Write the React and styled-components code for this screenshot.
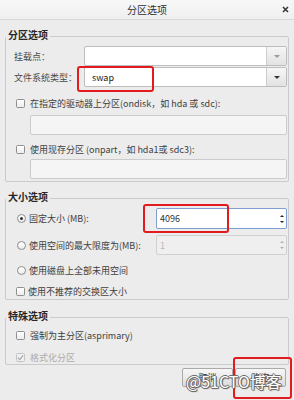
import React from 'react'
import styled, { createGlobalStyle } from 'styled-components'

const GlobalStyle = createGlobalStyle`
  html, body {
    margin: 0;
    padding: 0;
    background: #ececec;
  }
  body {
    font-family: "Noto Sans CJK SC", "Noto Sans", sans-serif;
    color: #404040;
  }
`

const Window = styled.div`
  position: relative;
  width: 294px;
  height: 400px;
  background: #ececec;
  overflow: hidden;
`

const TitleBar = styled.div`
  height: 20px;
  box-sizing: border-box;
  display: grid;
  grid-template-columns: 1fr auto 1fr;
  align-items: center;
  background: linear-gradient(#f8f8f8, #efefef);
  border-bottom: 1px solid #d8d8d8;
`

const Title = styled.div`
  grid-column: 2;
  font-size: 10px;
  color: #2f2f2f;
`

const Close = styled.div`
  justify-self: end;
  display: flex;
  padding-right: 5px;
`

const Content = styled.div`
  padding: 10px 5px 0;
`

const Frame = styled.fieldset`
  margin: ${p => p.$mt || 0}px 0 0;
  padding: ${p => p.$pt}px 1px ${p => p.$pb}px 8px;
  border: 1px solid #cacaca;
  border-radius: 2px;
  min-width: 0;
  display: flex;
  flex-direction: column;
`

const Legend = styled.legend`
  padding: 0 2px 3px;
  margin-left: -8px;
  font-size: 10px;
  line-height: 10px;
  font-weight: bold;
  color: #262626;
`

const FormRow = styled.div`
  display: flex;
  align-items: center;
  height: 20px;
  margin-top: ${p => p.$mt || 0}px;
`

const FieldLabel = styled.div`
  width: 70px;
  font-size: 9px;
  color: #4a4a4a;
`

const Combo = styled.div`
  flex: 1;
  display: flex;
  height: 100%;
  box-sizing: border-box;
  border: 1px solid #bdbdbd;
  border-radius: 2px;
  background: #fff;
  overflow: hidden;
`

const ComboText = styled.div`
  flex: 1;
  display: flex;
  align-items: center;
  padding-left: 7px;
  font-size: 9px;
  color: #222;
`

const ComboButton = styled.div`
  width: 19px;
  display: flex;
  align-items: center;
  justify-content: center;
  border-left: 1px solid #cdcdcd;
  background: linear-gradient(#f6f6f6, #e2e2e2);
`

const Arrow = styled.span`
  width: 0;
  height: 0;
  border-left: ${p => p.$s || 3}px solid transparent;
  border-right: ${p => p.$s || 3}px solid transparent;
  border-top: ${p => (p.$up ? 0 : `${p.$s || 3}px solid ${p.$c}`)};
  border-bottom: ${p => (p.$up ? `${p.$s || 3}px solid ${p.$c}` : 0)};
`

const CheckRow = styled.div`
  display: flex;
  align-items: center;
  gap: ${p => p.$gap || 5}px;
  height: 14px;
  padding-left: 2px;
  margin-top: ${p => p.$mt || 0}px;
  font-size: 9px;
  color: ${p => (p.$disabled ? '#ababab' : '#404040')};
  white-space: nowrap;
`

const Box = styled.span`
  width: 9px;
  height: 9px;
  box-sizing: border-box;
  flex: none;
  display: flex;
  align-items: center;
  justify-content: center;
  border: 1px solid ${p => (p.$disabled ? '#c4c4c4' : '#8f8f8f')};
  border-radius: 1.5px;
  background: ${p => (p.$disabled ? '#f0f0f0' : 'linear-gradient(#ffffff, #ececec)')};
`

const Round = styled(Box)`
  border-radius: 50%;
  border-color: #8c8c8c;
`

const Dot = styled.span`
  width: 3px;
  height: 3px;
  border-radius: 50%;
  background: #303030;
`

const Entry = styled.div`
  height: 20px;
  box-sizing: border-box;
  margin: ${p => p.$mt || 0}px 0 0 16px;
  border: 1px solid #cbcbcb;
  border-radius: 2px;
  background: #f5f5f5;
`

const RadioRow = styled.div`
  display: flex;
  align-items: center;
  height: ${p => p.$h}px;
  margin-top: ${p => p.$mt || 0}px;
  padding-left: 3px;
  font-size: 9px;
  color: #404040;
  white-space: nowrap;
`

const RadioLabel = styled.span`
  flex: 1;
  margin-left: 3px;
`

const Spin = styled.div`
  width: 131px;
  height: 100%;
  box-sizing: border-box;
  display: flex;
  border: 1px solid ${p => (p.$focus ? '#7e9fd0' : '#d0d0d0')};
  border-radius: 2px;
  background: ${p => (p.$disabled ? '#efefef' : '#fff')};
`

const SpinValue = styled.div`
  flex: 1;
  display: flex;
  align-items: center;
  padding-left: 3px;
  font-size: 9px;
  color: ${p => (p.$disabled ? '#b5b5b5' : '#333')};
`

const SpinArrows = styled.div`
  width: 8px;
  display: flex;
  flex-direction: column;
  align-items: center;
  justify-content: center;
  gap: 4px;
`

const ButtonBar = styled.div`
  display: flex;
  justify-content: flex-end;
  gap: 2px;
  margin-top: 3px;
  padding-right: 8px;
`

const Button = styled.div`
  width: 51px;
  height: 19px;
  box-sizing: border-box;
  display: flex;
  align-items: center;
  justify-content: center;
  border: 1px solid #aaaaaa;
  border-radius: 2px;
  background: linear-gradient(#f7f7f7, #dcdcdc);
  font-size: 9px;
  color: #333;
`

const RedMark = styled.div`
  position: absolute;
  box-sizing: border-box;
  border: 2.5px solid #e11b1e;
  border-radius: 3px;
  pointer-events: none;
`

const Watermark = styled.div`
  position: absolute;
  left: 186px;
  top: 370px;
  font-size: 16px;
  line-height: 22px;
  color: #fff;
  white-space: nowrap;
  text-shadow: 1px 0 0 #6d6d6d, -1px 0 0 #6d6d6d, 0 1px 0 #6d6d6d, 0 -1px 0 #6d6d6d,
    1px 1px 1px #555;
`

const Tick = ({ color }) => (
  <svg width="7" height="7" viewBox="0 0 8 8">
    <path d="M1 4.3 L3.2 6.4 L7 1.6" fill="none" stroke={color} strokeWidth="1.4" />
  </svg>
)

const Spinner = ({ value, focus, disabled }) => (
  <Spin $focus={focus} $disabled={disabled}>
    <SpinValue $disabled={disabled}>{value}</SpinValue>
    <SpinArrows>
      <Arrow $up $s={2.5} $c={disabled ? '#b0b0b0' : '#222'} />
      <Arrow $s={2.5} $c={disabled ? '#b0b0b0' : '#222'} />
    </SpinArrows>
  </Spin>
)

export default function App() {
  return (
    <>
      <GlobalStyle />
      <Window>
        <TitleBar>
          <Title>分区选项</Title>
          <Close>
            <svg width="7" height="7" viewBox="0 0 7 7">
              <path d="M1 1 L6 6 M6 1 L1 6" stroke="#333" strokeWidth="1.5" />
            </svg>
          </Close>
        </TitleBar>

        <Content>
          <Frame $pt={3} $pb={2}>
            <Legend>分区选项</Legend>
            <FormRow>
              <FieldLabel>挂载点：</FieldLabel>
              <Combo>
                <ComboText />
                <ComboButton>
                  <Arrow $c="#9a9a9a" />
                </ComboButton>
              </Combo>
            </FormRow>
            <FormRow $mt={1}>
              <FieldLabel>文件系统类型：</FieldLabel>
              <Combo>
                <ComboText>swap</ComboText>
                <ComboButton>
                  <Arrow $c="#333" />
                </ComboButton>
              </Combo>
            </FormRow>
            <CheckRow $mt={9}>
              <Box />
              在指定的驱动器上分区(ondisk，如 hda 或 sdc):
            </CheckRow>
            <Entry $mt={5} />
            <CheckRow $mt={7}>
              <Box />
              使用现存分区 (onpart，如 hda1或 sdc3):
            </CheckRow>
            <Entry $mt={3} />
          </Frame>

          <Frame $mt={10} $pt={3} $pb={1}>
            <Legend>大小选项</Legend>
            <RadioRow $h={21}>
              <Round>
                <Dot />
              </Round>
              <RadioLabel>固定大小 (MB):</RadioLabel>
              <Spinner value="4096" focus />
            </RadioRow>
            <RadioRow $h={20} $mt={6}>
              <Round />
              <RadioLabel>使用空间的最大限度为(MB):</RadioLabel>
              <Spinner value="1" disabled />
            </RadioRow>
            <RadioRow $h={14} $mt={8}>
              <Round />
              <RadioLabel>使用磁盘上全部未用空间</RadioLabel>
            </RadioRow>
            <CheckRow $mt={7} $gap={3}>
              <Box />
              使用不推荐的交换区大小
            </CheckRow>
          </Frame>

          <Frame $mt={11} $pt={4} $pb={0}>
            <Legend>特殊选项</Legend>
            <CheckRow>
              <Box />
              强制为主分区(asprimary)
            </CheckRow>
            <CheckRow $mt={8} $disabled>
              <Box $disabled>
                <Tick color="#a8a8a8" />
              </Box>
              格式化分区
            </CheckRow>
          </Frame>
        </Content>

        <ButtonBar>
          <Button>取消</Button>
          <Button>确定</Button>
        </ButtonBar>

        <RedMark style={{ left: 77, top: 66, width: 77, height: 26 }} />
        <RedMark style={{ left: 143, top: 204, width: 86, height: 29 }} />
        <RedMark style={{ left: 233, top: 357, width: 59, height: 42 }} />
        <Watermark>@51CTO博客</Watermark>
      </Window>
    </>
  )
}
